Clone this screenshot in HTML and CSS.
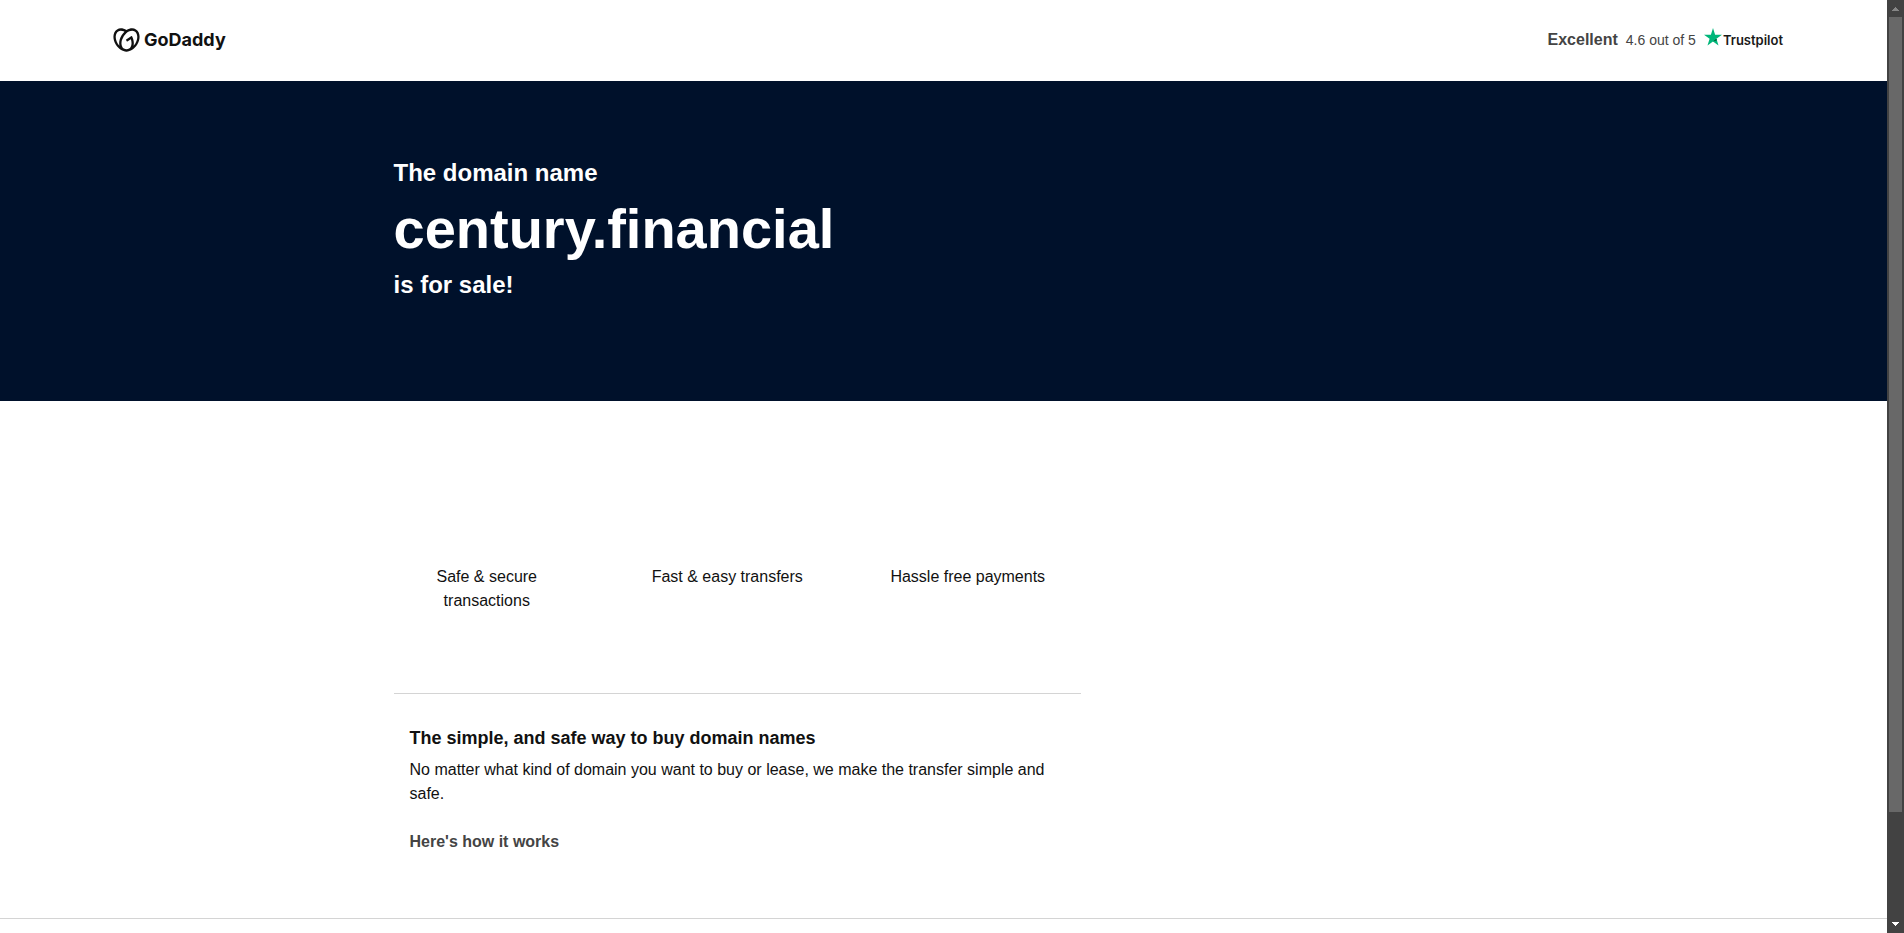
FILE: index.html
```html
<!DOCTYPE html>
<html lang="en">
<head>
<meta charset="utf-8">
<title>century.financial is for sale</title>
<link rel="stylesheet" href="styles.css">
</head>
<body>
<div class="window">
  <div class="page">
    <header class="header">
      <a class="brand" href="#" aria-label="GoDaddy">
        <svg class="brand-mark" viewBox="0 1 24 22" fill="#111" aria-hidden="true">
          <path d="M20.702 2.29c-2.494-1.554-5.778-1.187-8.706.654C9.076 1.104 5.79.736 3.3 2.29c-3.941 2.463-4.42 8.806-1.07 14.167 2.47 3.954 6.333 6.269 9.77 6.226 3.439.043 7.301-2.273 9.771-6.226 3.347-5.361 2.872-11.704-1.069-14.167zM4.042 15.328a12.838 12.838 0 01-1.546-3.541 10.12 10.12 0 01-.336-3.338c.15-1.98.956-3.524 2.27-4.345 1.315-.822 3.052-.87 4.903-.137.281.113.556.24.825.382A15.11 15.11 0 007.5 7.54c-2.035 3.255-2.655 6.878-1.945 9.765a13.247 13.247 0 01-1.514-1.98zm17.465-3.541a12.866 12.866 0 01-1.547 3.54 13.25 13.25 0 01-1.513 1.984c.635-2.589.203-5.76-1.353-8.734a.39.39 0 00-.563-.153l-4.852 3.032a.397.397 0 00-.126.546l.712 1.139a.395.395 0 00.547.126l3.145-1.965c.101.306.203.606.28.916.296 1.086.41 2.214.335 3.337-.15 1.982-.956 3.525-2.27 4.347a4.437 4.437 0 01-2.25.65h-.101a4.432 4.432 0 01-2.25-.65c-1.314-.822-2.121-2.365-2.27-4.347-.074-1.123.039-2.251.335-3.337a13.212 13.212 0 014.05-6.482 10.148 10.148 0 012.849-1.765c1.845-.733 3.586-.685 4.9.137 1.316.822 2.122 2.365 2.271 4.345a10.146 10.146 0 01-.33 3.334z"/>
        </svg>
        <span class="brand-name">GoDaddy</span>
      </a>
      <div class="rating">
        <strong class="rating-word">Excellent</strong>
        <span class="rating-score">4.6 out of 5</span>
        <a class="trustpilot" href="#">
          <svg class="star" viewBox="0 0 18 18" aria-hidden="true">
            <path fill="#00b67a" d="M9 0L11.100 6.700H18L12.400 10.800L14.500 17.500L9 13.400L3.500 17.500L5.600 10.800L0 6.700H6.900Z"/>
            <path fill="#005128" d="M12.900 12.300L12.400 10.800L9 13.400Z"/>
          </svg>
          <span class="trustpilot-name">Trustpilot</span>
        </a>
      </div>
    </header>

    <section class="hero">
      <h1 class="container hero-title">
        <span class="hero-line">The domain name</span>
        <span class="hero-domain">century.financial</span>
        <span class="hero-line">is for sale!</span>
      </h1>
    </section>

    <main class="container main">
      <div class="column">
        <ul class="features">
          <li>Safe &amp; secure transactions</li>
          <li>Fast &amp; easy transfers</li>
          <li>Hassle free payments</li>
        </ul>
        <section class="about">
          <h2 class="about-title">The simple, and safe way to buy domain names</h2>
          <p class="about-text">No matter what kind of domain you want to buy or lease, we make the transfer simple and safe.</p>
          <h3 class="about-how">Here's how it works</h3>
        </section>
      </div>
    </main>
    <footer class="footer"></footer>
  </div>
  <div class="scrollbar" aria-hidden="true">
    <svg class="arrow" viewBox="0 0 7 4"><path fill="#868686" d="M3 0h1v1h1v1h1v1h1v1H0V3h1V2h1V1h1z"/></svg>
    <div class="track"><div class="thumb"></div></div>
    <svg class="arrow" viewBox="0 0 7 4"><path fill="#fff" d="M0 0h7v1H6v1H5v1H4v1H3V3H2V2H1V1H0z"/></svg>
  </div>
</div>
</body>
</html>
```
FILE: styles.css
```css
* {
  box-sizing: border-box;
}

body {
  margin: 0;
  background: #fff;
  color: #111;
  font-family: "Liberation Sans", Arial, sans-serif;
  font-size: 16px;
  line-height: 24px;
}

h1, h2, h3, p, ul {
  margin: 0;
  padding: 0;
}

a {
  color: inherit;
  text-decoration: none;
}

.window {
  display: flex;
  height: 100vh;
}

.page {
  flex: 1;
  overflow: hidden;
}

.header {
  display: flex;
  align-items: center;
  justify-content: space-between;
  height: 81px;
  padding: 0 104px 2px 113px;
}

.brand {
  display: flex;
  align-items: center;
  gap: 4px;
}

.brand-mark {
  width: 27px;
  height: 24px;
}

.brand-name {
  font-family: Inter, sans-serif;
  font-size: 18px;
  font-weight: 700;
}

.rating {
  display: flex;
  align-items: center;
  gap: 8px;
  color: #444;
}

.rating-score {
  font-size: 14px;
}

.trustpilot {
  display: flex;
  align-items: center;
  gap: 1px;
  color: #191919;
}

.star {
  width: 18px;
  height: 18px;
  margin-bottom: 6px;
}

.trustpilot-name {
  font-family: Inter, sans-serif;
  font-size: 13px;
  font-weight: 600;
}

.hero {
  padding: 74px 0 98px;
  background: #00112b;
  color: #fff;
}

.container {
  max-width: 1100px;
  margin: 0 auto;
}

.hero-title {
  display: flex;
  flex-direction: column;
  font-weight: 700;
}

.hero-line {
  font-size: 24px;
  line-height: 36px;
}

.hero-domain {
  font-size: 56px;
  line-height: 76px;
}

.column {
  width: 62.5%;
}

.features {
  display: grid;
  grid-template-columns: repeat(3, 1fr);
  gap: 54px;
  padding: 164px 20px 80px 0;
  border-bottom: 1px solid #d4d4d4;
  list-style: none;
  text-align: center;
}

.about {
  padding: 32px 16px 64px;
}

.about-title {
  font-size: 18px;
  line-height: 24px;
}

.about-text {
  padding: 8px 0 24px;
}

.about-how {
  color: #444;
  font-size: 16px;
}

.footer {
  border-top: 1px solid #d4d4d4;
}

.scrollbar {
  display: flex;
  flex-direction: column;
  align-items: center;
  width: 17px;
  padding: 7px 2px;
  background: #424242;
}

.arrow {
  width: 7px;
  height: 4px;
}

.track {
  flex: 1;
  align-self: stretch;
  padding: 6px 0;
}

.thumb {
  height: 88.4%;
  background: #686868;
}
```
